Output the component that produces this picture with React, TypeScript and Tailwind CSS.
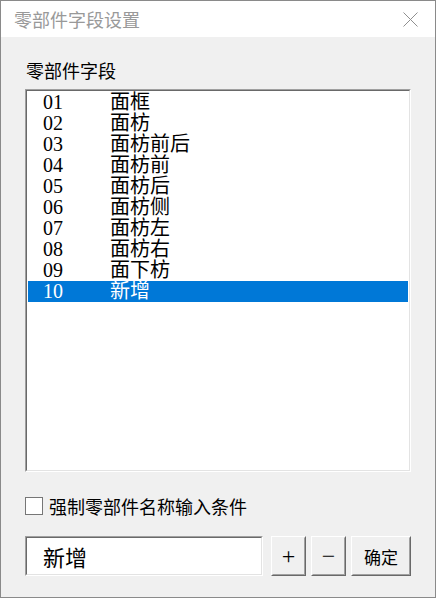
import { useState } from 'react';

const items = [
  { code: '01', name: '面框' },
  { code: '02', name: '面枋' },
  { code: '03', name: '面枋前后' },
  { code: '04', name: '面枋前' },
  { code: '05', name: '面枋后' },
  { code: '06', name: '面枋侧' },
  { code: '07', name: '面枋左' },
  { code: '08', name: '面枋右' },
  { code: '09', name: '面下枋' },
  { code: '10', name: '新增' },
];

const cjk = 'font-["Noto_Sans_CJK_SC",sans-serif]';
const serif = 'font-["Liberation_Serif","Noto_Sans_CJK_SC",serif]';

function Sunken({ className, children }: { className: string; children: React.ReactNode }) {
  return (
    <div className={`border border-t-[#a0a0a0] border-l-[#a0a0a0] border-r-white border-b-white ${className}`}>
      <div className="w-full h-full border border-t-[#696969] border-l-[#696969] border-r-[#e3e3e3] border-b-[#e3e3e3] bg-white">
        {children}
      </div>
    </div>
  );
}

function RaisedButton({ className, children }: { className: string; children: React.ReactNode }) {
  return (
    <button
      type="button"
      className={`h-10 border border-t-white border-l-white border-r-[#696969] border-b-[#696969] bg-[#f0f0f0] ${className}`}
    >
      <div className="w-full h-full flex items-center justify-center border border-t-[#f0f0f0] border-l-[#f0f0f0] border-r-[#a0a0a0] border-b-[#a0a0a0] text-black">
        {children}
      </div>
    </button>
  );
}

export default function App() {
  const [selected, setSelected] = useState('10');
  const [checked, setChecked] = useState(false);
  const [value, setValue] = useState('新增');

  return (
    <div className="w-[436px] h-[598px] flex flex-col border border-[#8a8a8a] bg-[#f0f0f0] overflow-hidden">
      <div className="h-9 shrink-0 bg-white flex items-center justify-between pl-[13px] pr-[17px]">
        <span className={`text-[18px] leading-6 text-[#999999] ${cjk}`}>零部件字段设置</span>
        <svg width="15" height="15" viewBox="0 0 15 15" className="text-[#8f8f8f]">
          <path d="M0.5 0.5 L14.5 14.5 M14.5 0.5 L0.5 14.5" stroke="currentColor" strokeWidth="1" fill="none" />
        </svg>
      </div>

      <div className="flex-1 flex flex-col pl-6 pr-6 pt-[21px]">
        <div className={`h-6 leading-6 text-[18px] text-black pl-px ${cjk}`}>零部件字段</div>

        <Sunken className="mt-[7px] h-[383px] w-[386px]">
          <div className="p-px">
            {items.map((it) => {
              const active = it.code === selected;
              return (
                <div
                  key={it.code}
                  onClick={() => setSelected(it.code)}
                  className={`h-[21px] flex items-center text-[20px] leading-[21px] ${serif} ${
                    active ? 'bg-[#0078d7] text-white' : 'text-black'
                  }`}
                >
                  <span className="pl-[15px] w-[82px] shrink-0">{it.code}</span>
                  <span>{it.name}</span>
                </div>
              );
            })}
          </div>
        </Sunken>

        <label className="mt-6 h-5 flex items-center gap-[6px] cursor-pointer">
          <span
            onClick={() => setChecked(!checked)}
            className="w-[18px] h-[18px] border border-[#767676] bg-white flex items-center justify-center text-[13px] leading-none"
          >
            {checked ? '✓' : ''}
          </span>
          <span className={`text-[18px] leading-5 text-black ${cjk}`}>强制零部件名称输入条件</span>
        </label>

        <div className="mt-[20px] flex items-center">
          <Sunken className="w-[238px] h-10">
            <input
              value={value}
              onChange={(e) => setValue(e.target.value)}
              className={`w-full h-full pl-[16px] text-[22px] text-black outline-none bg-white ${cjk}`}
            />
          </Sunken>
          <RaisedButton className="ml-2 w-[35px]">
            <span className={`text-[24px] leading-none ${serif}`}>+</span>
          </RaisedButton>
          <RaisedButton className="ml-[5px] w-[35px]">
            <span className={`text-[24px] leading-none ${serif}`}>−</span>
          </RaisedButton>
          <RaisedButton className="ml-[5px] w-[60px]">
            <span className={`text-[17px] leading-none ${cjk}`}>确定</span>
          </RaisedButton>
        </div>
      </div>
    </div>
  );
}
